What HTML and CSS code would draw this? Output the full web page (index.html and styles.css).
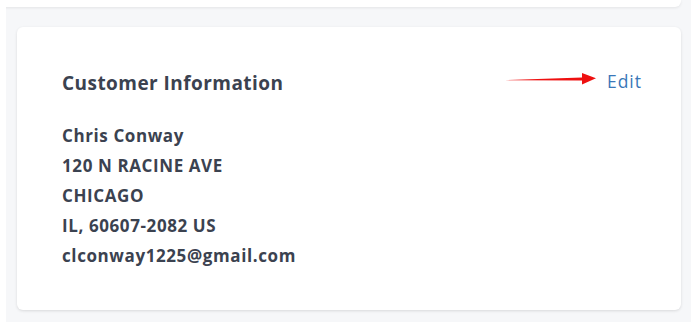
FILE: index.html
```html
<!DOCTYPE html>
<html>
<head>
<meta charset="utf-8">
<link rel="stylesheet" href="styles.css">
</head>
<body>
<div class="panel">
  <div class="prev-card"></div>
  <div class="card">
    <div class="card-header">
      <h2 class="title">Customer Information</h2>
      <a class="edit" href="#">Edit</a>
      <svg class="arrow" width="92" height="16" viewBox="0 0 92 16" aria-hidden="true">
        <path d="M0 8.2 L77 5.6 L77 1 L91 6.2 L77 12.6 L77 8.4 Z" fill="#ee1010"/>
      </svg>
    </div>
    <div class="address">
      <div class="line">Chris Conway</div>
      <div class="line">120 N RACINE AVE</div>
      <div class="line">CHICAGO</div>
      <div class="line">IL, 60607-2082 US</div>
      <div class="line">clconway1225@gmail.com</div>
    </div>
  </div>
</div>
</body>
</html>
```
FILE: styles.css
```css
html, body {
  margin: 0;
  padding: 0;
  background: #ffffff;
}
body {
  font-family: "Open Sans", "Liberation Sans", sans-serif;
  color: #3b4250;
}
.panel {
  margin-left: 6px;
  width: 685px;
  height: 322px;
  background: #f6f7f9;
  overflow: hidden;
}
.prev-card {
  margin-left: -6px;
  width: 681px;
  height: 7px;
  background: #ffffff;
  border-bottom-right-radius: 6px;
  box-shadow: 0 1px 3px rgba(0, 0, 0, 0.08);
}
.card {
  margin-top: 20px;
  margin-left: 11px;
  width: 664px;
  height: 283px;
  box-sizing: border-box;
  background: #ffffff;
  border-radius: 6px;
  box-shadow: 0 1px 3px rgba(0, 0, 0, 0.12);
  padding: 42px 40px 0 45px;
}
.card-header {
  position: relative;
  display: flex;
  justify-content: space-between;
  align-items: center;
  height: 28px;
}
.title {
  margin: 0;
  font-size: 19px;
  font-weight: 700;
  color: #3b4250;
  letter-spacing: 0.45px;
}
.edit {
  font-size: 17.5px;
  letter-spacing: 1px;
  color: #3a77b8;
  text-decoration: none;
  margin-top: -4px;
  margin-right: -1px;
}
.arrow {
  position: absolute;
  right: 44px;
  top: 3px;
}
.address {
  margin-top: 24px;
}
.line {
  font-size: 17px;
  font-weight: 700;
  line-height: 30px;
  letter-spacing: 0.6px;
  color: #3b4250;
}
```
